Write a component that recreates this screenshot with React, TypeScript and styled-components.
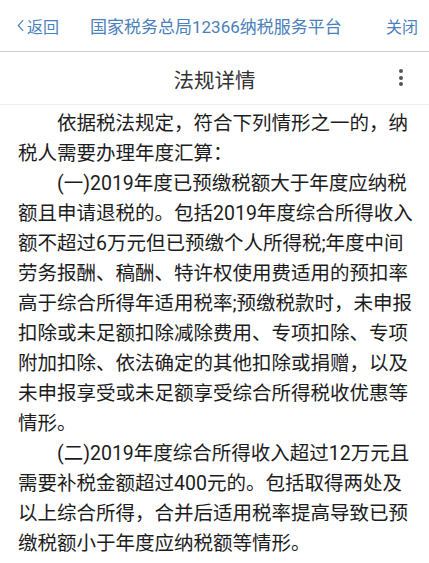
import React from "react"
import styled, { createGlobalStyle } from "styled-components"

const GlobalStyle = createGlobalStyle`
  html, body {
    margin: 0;
    padding: 0;
    background: #fff;
  }
  body {
    font-family: Roboto, "Noto Sans CJK SC", sans-serif;
  }
`

// line breaks follow the original page
const paragraphs = [
  ["依据税法规定，符合下列情形之一的，纳", "税人需要办理年度汇算："],
  [
    "(一)2019年度已预缴税额大于年度应纳税",
    "额且申请退税的。包括2019年度综合所得收入",
    "额不超过6万元但已预缴个人所得税;年度中间",
    "劳务报酬、稿酬、特许权使用费适用的预扣率",
    "高于综合所得年适用税率;预缴税款时，未申报",
    "扣除或未足额扣除减除费用、专项扣除、专项",
    "附加扣除、依法确定的其他扣除或捐赠，以及",
    "未申报享受或未足额享受综合所得税收优惠等",
    "情形。",
  ],
  [
    "(二)2019年度综合所得收入超过12万元且",
    "需要补税金额超过400元的。包括取得两处及",
    "以上综合所得，合并后适用税率提高导致已预",
    "缴税额小于年度应纳税额等情形。",
  ],
]

export default function App() {
  return (
    <>
      <GlobalStyle />
      <Page>
        <TopBar>
          <NavLink>
            <Chevron viewBox="0 0 10 16">
              <path d="M8 2 L2.5 8 L8 14" fill="none" stroke="currentColor" strokeWidth="1.3" />
            </Chevron>
            返回
          </NavLink>
          <TopTitle>国家税务总局12366纳税服务平台</TopTitle>
          <NavLink $right>关闭</NavLink>
        </TopBar>
        <Header>
          <HeaderTitle>法规详情</HeaderTitle>
          <MoreButton aria-label="更多">
            <Dot />
            <Dot />
            <Dot />
          </MoreButton>
        </Header>
        <Article>
          {paragraphs.map((lines, i) => (
            <Para key={i}>
              {lines.map((line, j) => (
                <Line key={j} $indent={j === 0}>
                  {line}
                </Line>
              ))}
            </Para>
          ))}
        </Article>
      </Page>
    </>
  )
}

const Page = styled.div`
  width: 429px;
  height: 563px;
  overflow: hidden;
  background: #fff;
`

const TopBar = styled.div`
  height: 52px;
  display: flex;
  align-items: center;
  padding: 0 11px 0 16px;
  border-bottom: 1px solid #cccccc;
  box-sizing: border-box;
  font-size: 16px;
`

const NavLink = styled.span<{ $right?: boolean }>`
  display: flex;
  align-items: center;
  gap: 2px;
  color: #4a80bb;
  margin-left: ${(p) => (p.$right ? "auto" : "0")};
`

const Chevron = styled.svg`
  width: 9px;
  height: 15px;
`

const TopTitle = styled.span`
  font-size: 17px;
  color: #4a80bb;
  margin-left: 31px;
`

const Header = styled.div`
  position: relative;
  height: 53px;
  display: flex;
  align-items: center;
  justify-content: center;
  border-bottom: 1px solid #eeeeee;
  box-sizing: border-box;
`

const HeaderTitle = styled.span`
  font-size: 20.5px;
  color: #333;
  margin-top: 1px;
`

const MoreButton = styled.div`
  position: absolute;
  right: 26px;
  top: 17px;
  display: flex;
  flex-direction: column;
  gap: 2.5px;
`

const Dot = styled.span`
  width: 4px;
  height: 4px;
  border-radius: 50%;
  background: #555;
`

const Article = styled.div`
  padding: 4px 12px 0 18px;
`

const Para = styled.div`
  font-size: 19.5px;
  line-height: 30px;
  color: #1c1c1c;
  white-space: nowrap;
`

const Line = styled.span<{ $indent: boolean }>`
  display: block;
  text-indent: ${(p) => (p.$indent ? "2em" : "0")};
`
